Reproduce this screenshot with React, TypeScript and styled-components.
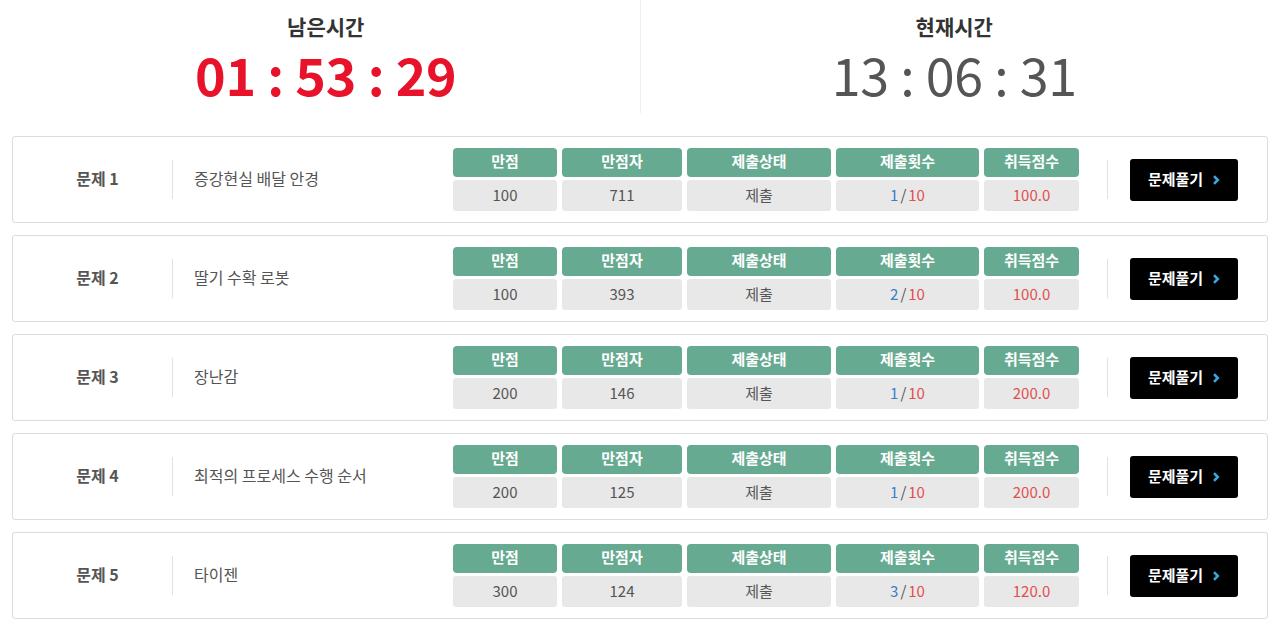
import React from 'react';
import styled, { createGlobalStyle } from 'styled-components';

const GlobalStyle = createGlobalStyle`
  html, body {
    margin: 0;
    padding: 0;
    background: #fff;
  }
  body {
    font-family: 'Noto Sans CJK KR', 'Noto Sans', sans-serif;
  }
`;

const problems = [
  { no: 1, title: '증강현실 배달 안경', full: 100, count: 711, tries: 1, score: '100.0' },
  { no: 2, title: '딸기 수확 로봇', full: 100, count: 393, tries: 2, score: '100.0' },
  { no: 3, title: '장난감', full: 200, count: 146, tries: 1, score: '200.0' },
  { no: 4, title: '최적의 프로세스 수행 순서', full: 200, count: 125, tries: 1, score: '200.0' },
  { no: 5, title: '타이젠', full: 300, count: 124, tries: 3, score: '120.0' },
];

const columns = [
  { key: 'full', label: '만점', width: 104 },
  { key: 'count', label: '만점자', width: 120 },
  { key: 'status', label: '제출상태', width: 144 },
  { key: 'tries', label: '제출횟수', width: 143 },
  { key: 'score', label: '취득점수', width: 95 },
];

function App() {
  return (
    <>
      <GlobalStyle />
      <Page>
        <TimeHeader>
          <TimeBox>
            <TimeLabel>남은시간</TimeLabel>
            <TimeValue remain>01 : 53 : 29</TimeValue>
          </TimeBox>
          <TimeBox divided>
            <TimeLabel>현재시간</TimeLabel>
            <TimeValue>13 : 06 : 31</TimeValue>
          </TimeBox>
        </TimeHeader>

        <List>
          {problems.map((p) => (
            <Card key={p.no}>
              <ProblemNo>문제 {p.no}</ProblemNo>
              <VDivider />
              <Title>{p.title}</Title>
              <Table>
                {columns.map((c) => (
                  <Column key={c.key} w={c.width}>
                    <HeadCell>{c.label}</HeadCell>
                    <ValueCell>
                      {c.key === 'full' && p.full}
                      {c.key === 'count' && p.count}
                      {c.key === 'status' && '제출'}
                      {c.key === 'tries' && (
                        <>
                          <Blue>{p.tries}</Blue>
                          <Slash>/</Slash>
                          <Red>10</Red>
                        </>
                      )}
                      {c.key === 'score' && <Red>{p.score}</Red>}
                    </ValueCell>
                  </Column>
                ))}
              </Table>
              <VDivider right />
              <SolveButton>
                문제풀기
                <Chevron viewBox="0 0 8 12">
                  <path d="M2 2.2l3.8 3.8-3.8 3.8" fill="none" stroke="#3ba6d8" strokeWidth="2.6" />
                </Chevron>
              </SolveButton>
            </Card>
          ))}
        </List>
      </Page>
    </>
  );
}

const Page = styled.div`
  width: 1256px;
  margin: 0 auto;
  padding: 0 12px;
`;

const TimeHeader = styled.div`
  display: flex;
  height: 113px;
`;

const TimeBox = styled.div<{ divided?: boolean }>`
  flex: 1;
  display: flex;
  flex-direction: column;
  align-items: center;
  border-left: ${(p) => (p.divided ? '1px solid #eee' : 'none')};
  padding-top: 11px;
  box-sizing: border-box;
`;

const TimeLabel = styled.div`
  font-size: 21px;
  font-weight: 700;
  color: #333;
  line-height: 30px;
`;

const TimeValue = styled.div<{ remain?: boolean }>`
  margin-top: 5px;
  font-size: 52px;
  line-height: 56px;
  font-weight: ${(p) => (p.remain ? 700 : 400)};
  color: ${(p) => (p.remain ? '#e8132b' : '#555')};
  letter-spacing: -0.3px;
`;

const List = styled.div`
  display: flex;
  flex-direction: column;
  gap: 12px;
  margin-top: 23px;
`;

const Card = styled.div`
  display: flex;
  align-items: center;
  height: 87px;
  box-sizing: border-box;
  border: 1px solid #dcdcdc;
  border-radius: 3px;
  padding: 0 29px 0 0;
`;

const ProblemNo = styled.div`
  width: 159px;
  box-sizing: border-box;
  padding: 0 0 3px 10px;
  text-align: center;
  font-size: 16px;
  font-weight: 700;
  color: #555;
`;

const VDivider = styled.div<{ right?: boolean }>`
  width: 1px;
  height: 39px;
  background: #e2e2e2;
  margin: ${(p) => (p.right ? '0 22px 0 28px' : '0 21px 0 0')};
`;

const Title = styled.div`
  flex: 1;
  font-size: 16px;
  color: #555;
  padding-bottom: 3px;
`;

const Table = styled.div`
  display: flex;
  gap: 5px;
`;

const Column = styled.div<{ w: number }>`
  width: ${(p) => p.w}px;
  display: flex;
  flex-direction: column;
  gap: 3px;
`;

const HeadCell = styled.div`
  height: 29px;
  box-sizing: border-box;
  padding-bottom: 4px;
  background: #66aa91;
  border-radius: 4px;
  color: #fff;
  font-size: 15px;
  font-weight: 700;
  display: flex;
  align-items: center;
  justify-content: center;
`;

const ValueCell = styled.div`
  height: 31px;
  box-sizing: border-box;
  padding-bottom: 3px;
  background: #e8e8e8;
  border-radius: 3px;
  color: #555;
  font-size: 15px;
  display: flex;
  align-items: center;
  justify-content: center;
`;

const Blue = styled.span`
  color: #3a7ec8;
`;

const Red = styled.span`
  color: #e05050;
`;

const Slash = styled.span`
  color: #555;
  margin: 0 2px;
`;

const SolveButton = styled.button`
  width: 108px;
  height: 42px;
  box-sizing: border-box;
  background: #000;
  border: none;
  border-radius: 3px;
  color: #fff;
  font-family: 'Noto Sans CJK KR', 'Noto Sans', sans-serif;
  font-size: 15px;
  font-weight: 700;
  display: flex;
  align-items: center;
  justify-content: center;
  gap: 9px;
  padding: 0 0 3px;
`;

const Chevron = styled.svg`
  width: 8px;
  height: 12px;
  margin-top: 3px;
`;

export default App;
